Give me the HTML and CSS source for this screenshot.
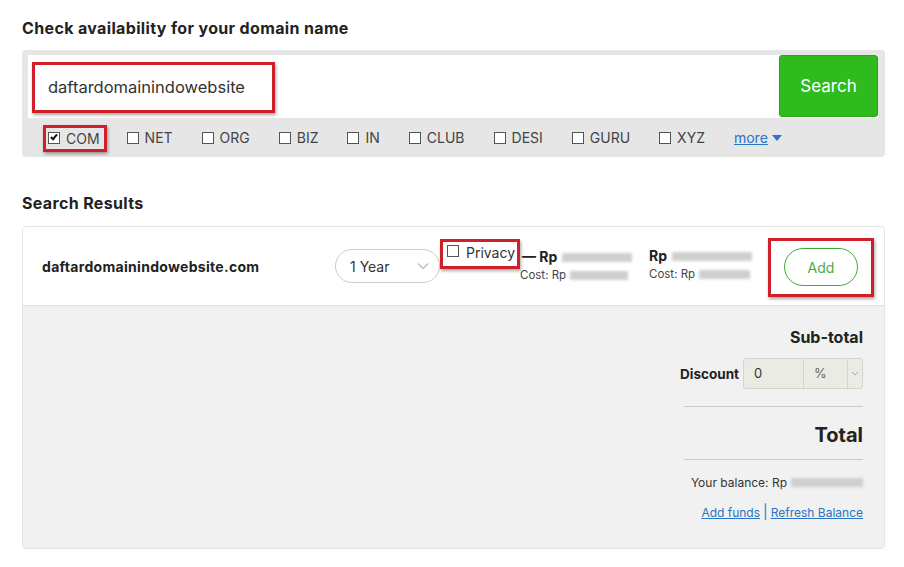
FILE: index.html
```html
<!DOCTYPE html>
<html lang="en">
<head>
    <meta charset="UTF-8">
    <meta name="viewport" content="width=device-width, initial-scale=1.0">
    <title>Domain Search</title>
    <link rel="stylesheet" href="styles.css">
</head>
<body>
    <div class="page">
        <h2 class="title">Check availability for your domain name</h2>

        <div class="search-box">
            <div class="search-row">
                <div class="search-input">
                    <span class="mark query">daftardomainindowebsite</span>
                </div>
                <button class="search-btn">Search</button>
            </div>
            <div class="tlds">
                <label class="tld mark com"><span class="box checked"></span>COM</label>
                <label class="tld"><span class="box"></span>NET</label>
                <label class="tld"><span class="box"></span>ORG</label>
                <label class="tld"><span class="box"></span>BIZ</label>
                <label class="tld"><span class="box"></span>IN</label>
                <label class="tld"><span class="box"></span>CLUB</label>
                <label class="tld"><span class="box"></span>DESI</label>
                <label class="tld"><span class="box"></span>GURU</label>
                <label class="tld"><span class="box"></span>XYZ</label>
                <span class="more-wrap"><a class="more" href="#">more</a><span class="caret"></span></span>
            </div>
        </div>

        <h2 class="title results-title">Search Results</h2>

        <div class="card">
            <div class="result">
                <div class="domain">daftardomainindowebsite.com</div>
                <div class="period">
                    <span>1 Year</span>
                    <svg width="12" height="8" viewBox="0 0 12 8"><path d="M1 1.5 L6 6.5 L11 1.5" fill="none" stroke="#bbb" stroke-width="1.3"/></svg>
                </div>
                <div class="privacy-wrap">
                    <label class="mark privacy"><span class="box"></span>Privacy</label>
                    <div class="price first">
                        <div class="price-main">&mdash; Rp <span class="blur w70"></span></div>
                        <div class="price-cost">Cost: Rp <span class="blur w58"></span></div>
                    </div>
                </div>
                <div class="price second">
                    <div class="price-main">Rp <span class="blur w80"></span></div>
                    <div class="price-cost">Cost: Rp <span class="blur w50"></span></div>
                </div>
                <div class="mark add-wrap">
                    <button class="add-btn">Add</button>
                </div>
            </div>

            <div class="summary">
                <div class="subtotal">Sub-total</div>
                <div class="discount">
                    <span class="discount-label">Discount</span>
                    <div class="discount-group">
                        <span class="d-value">0</span>
                        <span class="d-unit">%</span>
                        <span class="d-arrow">
                            <svg width="8" height="5" viewBox="0 0 8 5"><path d="M1 1 L4 4 L7 1" fill="none" stroke="#aaa" stroke-width="1"/></svg>
                        </span>
                    </div>
                </div>
                <div class="rule"></div>
                <div class="total">Total</div>
                <div class="rule"></div>
                <div class="balance">Your balance: Rp <span class="blur w72"></span></div>
                <div class="links"><a href="#">Add funds</a><span class="sep">|</span><a href="#">Refresh Balance</a></div>
            </div>
        </div>
    </div>
</body>
</html>
```

FILE: styles.css
```css
*,
*:after,
*:before
{
    margin: 0;
    padding: 0;
    box-sizing: border-box;
}
body
{
    font-family: "Inter", "Liberation Sans", sans-serif;
    color: #222;
    background: #fff;
}
.page
{
    width: 863px;
    margin-left: 22px;
    padding-top: 18px;
}
.title
{
    font-size: 16px;
    font-weight: 700;
    letter-spacing: .35px;
    line-height: 20px;
    color: #222;
}

.mark
{
    border: 3px solid #d11f2a;
    box-shadow: 1px 2px 3px rgba(0,0,0,.35);
}

/* search box */
.search-box
{
    margin-top: 12px;
    background: #e6e6e6;
    border-radius: 4px;
    padding: 5px 7px 0 6px;
    height: 107px;
}
.search-row
{
    display: flex;
    height: 63px;
    background: #fff;
}
.search-input
{
    flex: 1;
    padding: 7px 0 0 4px;
}
.query
{
    display: inline-block;
    width: 243px;
    height: 51px;
    padding-left: 13px;
    line-height: 45px;
    font-size: 16.5px;
    color: #333;
}
.search-btn
{
    width: 99px;
    height: 62px;
    border: 1px solid #28a518;
    border-radius: 3px;
    background: #2fbb1e;
    color: #fff;
    font-family: inherit;
    font-size: 17px;
}
.tlds
{
    display: flex;
    align-items: center;
    height: 39px;
    padding-left: 20px;
    font-size: 14px;
    color: #444;
}
.tld
{
    display: flex;
    align-items: center;
    margin-right: 29px;
}
.box
{
    display: inline-block;
    width: 12px;
    height: 12px;
    border: 1px solid #555;
    background: #fff;
    margin-right: 6px;
    position: relative;
}
.box.checked:after
{
    content: "";
    position: absolute;
    left: 3px;
    top: 0;
    width: 4px;
    height: 7px;
    border: solid #111;
    border-width: 0 2px 2px 0;
    transform: rotate(40deg);
}
.com
{
    margin-left: -5px;
    margin-right: 20px;
    padding: 0 4px 0 2px;
    height: 27px;
    margin-top: 1px;
}
.more-wrap
{
    display: flex;
    align-items: center;
    gap: 4px;
}
.more
{
    color: #2a75c4;
    text-decoration: underline;
}
.caret
{
    width: 0;
    height: 0;
    border-left: 5px solid transparent;
    border-right: 5px solid transparent;
    border-top: 6px solid #2a75c4;
}

/* results */
.results-title
{
    margin-top: 36px;
}
.card
{
    margin-top: 13px;
    border: 1px solid #e4e4e4;
    border-radius: 4px;
    height: 323px;
    background: #f1f1f1;
    overflow: hidden;
}
.result
{
    display: flex;
    align-items: center;
    height: 79px;
    background: #fff;
    border-bottom: 1px solid #e2e2e2;
    padding-left: 19px;
}
.domain
{
    width: 293px;
    font-size: 14px;
    font-weight: 700;
    letter-spacing: .3px;
}
.period
{
    width: 105px;
    height: 34px;
    border: 1px solid #ccc;
    border-radius: 17px;
    display: flex;
    align-items: center;
    justify-content: space-between;
    padding: 0 10px 0 14px;
    font-size: 14px;
    color: #333;
}
.privacy-wrap
{
    display: flex;
    align-items: flex-start;
    align-self: flex-start;
    margin-top: 12px;
}
.privacy
{
    display: flex;
    align-items: center;
    height: 30px;
    width: 80px;
    padding: 0 0 3px 4px;
    font-size: 14px;
    color: #333;
}
.privacy .box
{
    margin-right: 7px;
    margin-bottom: 3px;
}
.price
{
    font-size: 14px;
}
.price.first
{
    margin-top: 9px;
    width: 129px;
    padding-left: 2px;
}
.price-main
{
    font-weight: 700;
    display: flex;
    align-items: center;
    gap: 5px;
    line-height: 18px;
}
.price-cost
{
    font-size: 11.5px;
    color: #444;
    display: flex;
    align-items: center;
    gap: 4px;
    line-height: 18px;
}
.price.first .price-cost
{
    margin-left: -2px;
}
.price.second
{
    margin-top: -2px;
    width: 119px;
}
.blur
{
    display: inline-block;
    height: 9px;
    background: #cfcfcf;
    filter: blur(1.5px);
}
.w50 { width: 51px; }
.w58 { width: 58px; }
.w70 { width: 70px; }
.w72 { width: 72px; }
.w80 { width: 80px; }
.add-wrap
{
    width: 106px;
    height: 59px;
    display: flex;
    align-items: center;
    justify-content: center;
    margin-top: 2px;
}
.add-btn
{
    width: 74px;
    height: 38px;
    border: 1px solid #3aae37;
    border-radius: 19px;
    background: #fff;
    color: #4aad3b;
    font-family: inherit;
    font-size: 14px;
}

/* summary */
.summary
{
    display: flex;
    flex-direction: column;
    align-items: flex-end;
    padding: 21px 21px 0 0;
}
.subtotal
{
    font-size: 16px;
    font-weight: 700;
    line-height: 20px;
}
.discount
{
    display: flex;
    align-items: center;
    margin-top: 11px;
    gap: 4px;
}
.rule
{
    width: 179px;
    border-top: 1px solid #c8c8c8;
}
.discount + .rule
{
    margin-top: 17px;
}
.discount-label
{
    font-size: 13.5px;
    font-weight: 700;
}
.discount-group
{
    display: flex;
    width: 120px;
    height: 31px;
    border: 1px solid #d5d5d0;
    border-radius: 3px;
    background: #ebebe5;
    font-size: 13px;
    color: #333;
}
.d-value
{
    width: 60px;
    padding-left: 10px;
    line-height: 29px;
    border-right: 1px solid #d5d5d0;
}
.d-unit
{
    width: 44px;
    padding-left: 10px;
    line-height: 29px;
    color: #666;
    border-right: 1px solid #d5d5d0;
}
.d-arrow
{
    flex: 1;
    display: flex;
    align-items: center;
    justify-content: center;
}
.total
{
    font-size: 20px;
    font-weight: 700;
    line-height: 24px;
    margin: 16px 0 12px;
}
.balance
{
    margin-top: 15px;
    font-size: 12px;
    color: #333;
    display: flex;
    align-items: center;
    gap: 4px;
}
.links
{
    margin-top: 13px;
    font-size: 12px;
}
.links a
{
    color: #2a75c4;
    text-decoration: underline;
}
.sep
{
    color: #2a75c4;
    margin: 0 3px;
    font-size: 14px;
}
```
